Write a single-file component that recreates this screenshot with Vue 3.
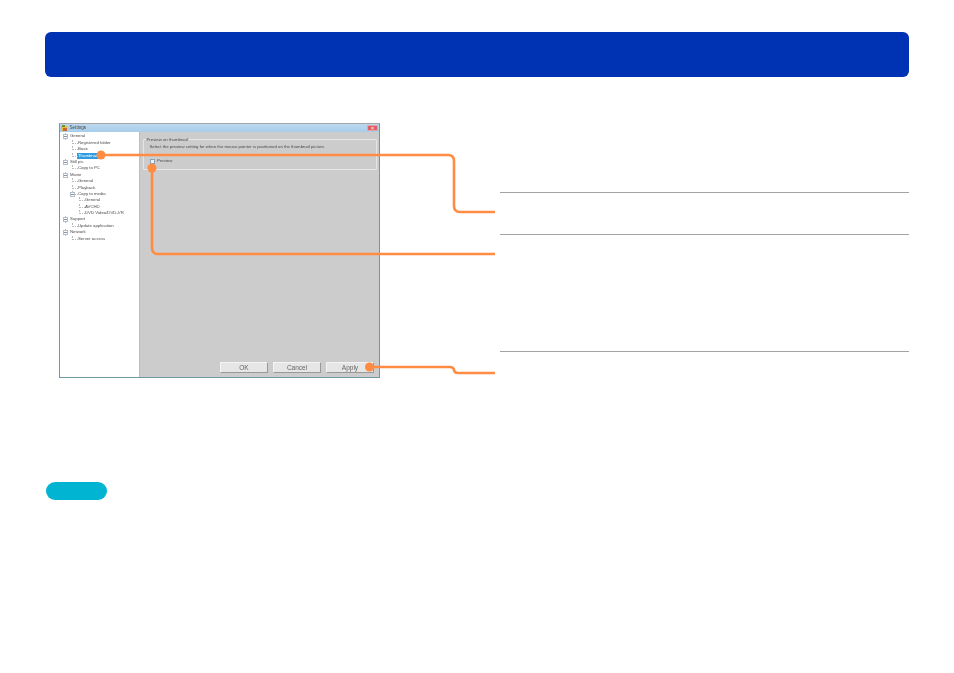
<template>
  <div class="page">
    <header class="banner"></header>

    <section class="content">
      <div class="window">
        <div class="titlebar">
          <svg class="app-icon" width="7" height="7" viewBox="0 0 7 7">
            <rect x="0" y="1" width="6" height="5" fill="#e8b93a" />
            <rect x="1" y="0" width="3" height="2" fill="#6f8f3c" />
            <rect x="2" y="3" width="4" height="3" fill="#c9662d" />
          </svg>
          <span class="title">Settings</span>
          <span class="close"><i>×</i></span>
        </div>
        <div class="body">
          <ul class="tree">
            <li
              v-for="item in tree"
              :key="item.id"
              class="node"
              :class="['lvl' + item.level, { sel: item.sel }]"
            >
              <span v-if="item.exp" class="expander"></span>
              <span class="label">{{ item.text }}</span>
            </li>
          </ul>
          <div class="panel">
            <fieldset class="group">
              <legend>Preview on thumbnail</legend>
              <p class="hint">Select the preview setting for when the mouse pointer is positioned on the thumbnail picture.</p>
              <label class="check"><span class="box"></span>Preview</label>
            </fieldset>
            <div class="buttons">
              <button>OK</button>
              <button>Cancel</button>
              <button>Apply</button>
            </div>
          </div>
        </div>
      </div>

      <div class="rules">
        <div class="rule first"></div>
        <div class="rule second"></div>
        <div class="rule"></div>
      </div>
    </section>

    <div class="pill"></div>

    <svg class="callouts" width="954" height="673" viewBox="0 0 954 673">
      <g fill="none" stroke="#ff8c42" stroke-width="2.6">
        <path d="M101 155H448Q454 155 454 161V206Q454 212 460 212H495" />
        <path d="M152 168V248Q152 254 158 254H495" />
        <path d="M370 367H450Q453.500 367 454 370Q454.500 373 458 373H495" />
      </g>
      <g fill="#ff8c42">
        <circle cx="101" cy="155" r="4.500" />
        <circle cx="152" cy="168" r="4.500" />
        <circle cx="369.500" cy="367" r="4.500" />
      </g>
    </svg>
  </div>
</template>

<script setup>
const rows = [
  ["General", 0, true],
  ["Registered folder", 1],
  ["Basic", 1],
  ["Thumbnail", 1, false, true],
  ["Still pic", 0, true],
  ["Copy to PC", 1],
  ["Movie", 0, true],
  ["General", 1],
  ["Playback", 1],
  ["Copy to media", 1, true],
  ["General", 2],
  ["AVCHD", 2],
  ["DVD Video/DVD-VR", 2],
  ["Support", 0, true],
  ["Update application", 1],
  ["Network", 0, true],
  ["Server access", 1],
];

const tree = rows.map(([text, level, exp, sel], id) => ({ id, text, level, exp, sel }));
</script>

<style>
html,
body {
  margin: 0;
  background: #fff;
}
</style>

<style scoped>
.page {
  position: relative;
  width: 954px;
  height: 673px;
  overflow: hidden;
  padding-top: 32px;
  box-sizing: border-box;
  font-family: "Liberation Sans", Arial, sans-serif;
}

.banner {
  height: 45px;
  margin: 0 45px;
  background: #0033b4;
  border-radius: 6px;
}

.content {
  display: flex;
  justify-content: space-between;
  margin: 46px 45px 0 59px;
}

.window {
  width: 321px;
  height: 255px;
  box-sizing: border-box;
  display: flex;
  flex-direction: column;
  border: 1px solid #6f98a3;
  border-top-color: #a5a5a5;
  background: #ccc;
  color: #4a4a4a;
  font-size: 4.300px;
  line-height: 6.400px;
}

.titlebar {
  height: 8px;
  flex: none;
  display: flex;
  align-items: center;
  padding: 0 1px;
  gap: 1.500px;
  background: linear-gradient(#bcd8ee, #a9cdea);
  color: #444;
  font-size: 4.600px;
  filter: blur(0.25px);
}

.app-icon {
  flex: none;
}

.close {
  margin-left: auto;
  width: 11px;
  height: 6px;
  background: #dc6068;
  border: 1px solid #e6a3a6;
  box-sizing: border-box;
  color: #fff;
  display: flex;
  align-items: center;
  justify-content: center;
  font-size: 6px;
}

.close i {
  font-style: normal;
  line-height: 4px;
}

.body {
  flex: 1;
  display: flex;
  min-height: 0;
}

.tree {
  width: 79.500px;
  flex: none;
  margin: 0;
  padding: 1.400px 0 0;
  list-style: none;
  background: #fff;
  border-right: 1px solid #bdbdbd;
  box-sizing: border-box;
  filter: blur(0.3px);
}

.node {
  position: relative;
  height: 6.400px;
  white-space: nowrap;
}

.lvl0 {
  padding-left: 10px;
}

.lvl1 {
  padding-left: 18px;
}

.lvl2 {
  padding-left: 25px;
}

.node::before {
  content: "";
  position: absolute;
  top: 0;
  height: 3px;
  border-left: 1px dotted #bbb;
  border-bottom: 1px dotted #bbb;
}

.lvl0::before {
  left: 5px;
  width: 4px;
  height: 6.400px;
  border-bottom: 0;
}

.lvl1::before {
  left: 12px;
  width: 5px;
}

.lvl2::before {
  left: 19px;
  width: 5px;
}

.expander {
  position: absolute;
  top: 1px;
  width: 5px;
  height: 5px;
  box-sizing: border-box;
  border: 1px solid #b4bdca;
  background: linear-gradient(#fff 1px, #8b95a5 1px, #8b95a5 2px, #fff 2px);
  z-index: 1;
}

.lvl0 .expander {
  left: 3px;
}

.lvl1 .expander {
  left: 10px;
}

.sel .label {
  background: #2f9be0;
  color: #fff;
  padding: 0 1px;
  margin-left: -1px;
  display: inline-block;
  width: 20px;
  height: 6px;
}

.panel {
  flex: 1;
  display: flex;
  flex-direction: column;
  padding: 0 2px 4px 3px;
  filter: blur(0.3px);
}

.group {
  height: 33px;
  margin: 5px 0 0;
  padding: 0 6px;
  box-sizing: border-box;
  border: 1px solid #e6e6e6;
  border-radius: 1px;
  min-width: 0;
}

.group legend {
  padding: 0 1px;
  margin-left: -4px;
  font-size: 4.300px;
  line-height: 5px;
}

.hint {
  margin: 1.500px 0 0;
  white-space: nowrap;
}

.check {
  display: flex;
  align-items: center;
  gap: 2.500px;
  margin-top: 8px;
}

.box {
  width: 5px;
  height: 5px;
  box-sizing: border-box;
  border: 1px solid #8aa0b8;
  background: #f2f2f2;
}

.buttons {
  margin-top: auto;
  display: flex;
  justify-content: flex-end;
  gap: 5px;
  padding-right: 3px;
}

.buttons button {
  width: 48px;
  height: 11.500px;
  padding: 0;
  box-sizing: border-box;
  border: 1px solid #999;
  border-top-color: #f4f4f4;
  border-left-color: #f4f4f4;
  background: #e6e6e6;
  color: #666;
  font-family: inherit;
  font-size: 6.500px;
  line-height: 9px;
}

.rules {
  width: 409px;
  padding-top: 69px;
}

.rule {
  height: 1px;
  background: #a3a3a3;
}

.first {
  margin-bottom: 41px;
}

.second {
  margin-bottom: 116px;
}

.pill {
  width: 61px;
  height: 18px;
  margin: 104px 0 0 46px;
  border-radius: 9px;
  background: #00b4d2;
}

.callouts {
  position: absolute;
  left: 0;
  top: 0;
  pointer-events: none;
}
</style>
